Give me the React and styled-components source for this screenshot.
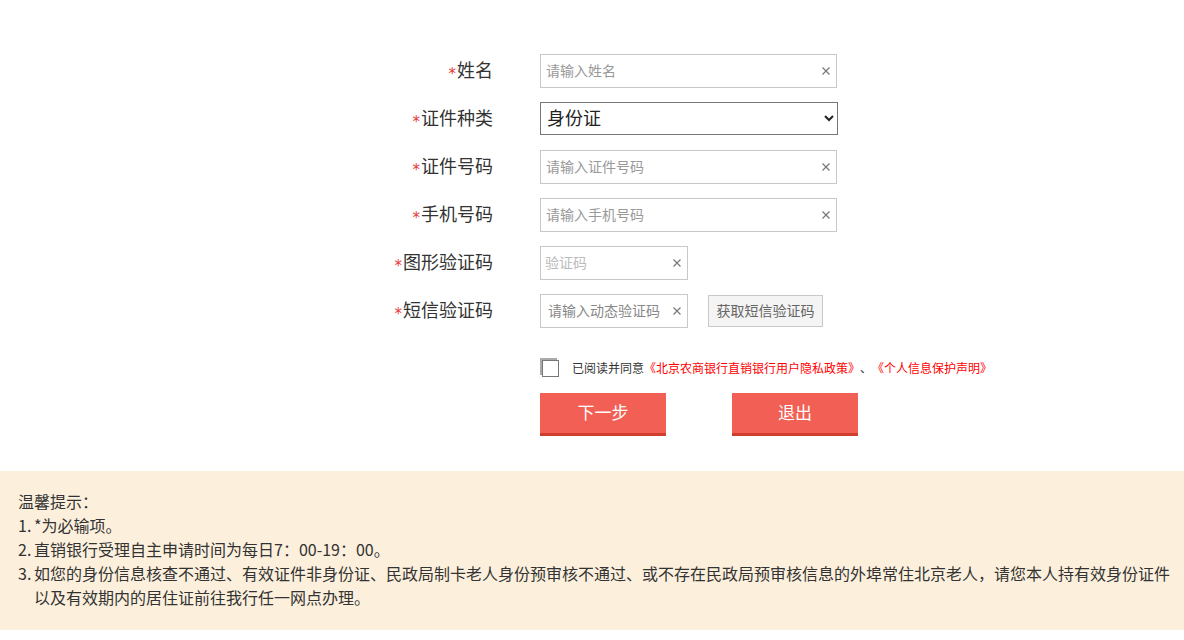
import React from 'react';
import styled, { createGlobalStyle } from 'styled-components';

const GlobalStyle = createGlobalStyle`
    html, body {
        margin: 0;
        padding: 0;
        background: #fff;
    }
    body {
        font-family: "Noto Sans CJK SC", "Noto Sans", sans-serif;
        color: #333;
    }
`;

const Page = styled.div`
    width: 1184px;
    height: 640px;
    overflow: hidden;
    background: #fff;
`;

const Form = styled.form`
    padding-top: 54px;
`;

const Row = styled.div`
    display: flex;
    align-items: center;
    height: 34px;
    margin-bottom: 14px;

    &:last-of-type {
        margin-bottom: 0;
    }
`;

const Label = styled.label`
    flex: 0 0 540px;
    box-sizing: border-box;
    padding: 0 47px 2px 0;
    text-align: right;
    font-size: 18px;
    line-height: 32px;
    color: #333;

    i {
        font-style: normal;
        font-family: "DejaVu Sans", sans-serif;
        color: #e4393c;
        font-size: 15px;
        margin-right: 1px;
        position: relative;
        top: 2px;
    }
`;

const Field = styled.div`
    position: relative;
    width: ${props => props.width}px;
    height: 34px;
`;

const Input = styled.input`
    width: 100%;
    height: 100%;
    box-sizing: border-box;
    border: 1px solid #c8c8c8;
    border-radius: 0;
    outline: none;
    padding: 0 26px 2px ${props => props.$pad || 5}px;
    font-family: "Noto Sans CJK SC", sans-serif;
    font-size: 14px;
    color: #333;

    &::placeholder {
        color: ${props => props.$ph || '#999'};
    }
`;

const Clear = styled.span`
    position: absolute;
    right: 7px;
    top: 50%;
    width: 8px;
    height: 8px;
    margin-top: -4px;
    display: flex;
`;

const Select = styled.select`
    align-self: flex-start;
    width: 298px;
    height: 33px;
    box-sizing: border-box;
    border: 1px solid #767676;
    border-radius: 0;
    background: #fff;
    padding: 0 2px 4px;
    font-family: "Noto Sans CJK SC", sans-serif;
    font-size: 18px;
    color: #222;
    outline: none;
`;

const SmsButton = styled.button`
    margin-left: 20px;
    width: 115px;
    height: 32px;
    box-sizing: border-box;
    border: 1px solid #c8c8c8;
    background: #f4f4f4;
    color: #666;
    font-family: "Noto Sans CJK SC", sans-serif;
    font-size: 14px;
    padding: 0 0 2px;
    cursor: pointer;
`;

const Agree = styled.div`
    display: flex;
    align-items: center;
    margin: 30px 0 0 542px;
    height: 18px;
    font-size: 12px;
    color: #333;

    a {
        color: #f00;
        text-decoration: none;
    }
`;

const Check = styled.span`
    width: 17px;
    height: 17px;
    box-sizing: border-box;
    border: 1px solid #777;
    box-shadow: -2px -2px 0 #aaa;
    background: #fff;
    margin: 2px 13px 0 0;
`;

const Buttons = styled.div`
    display: flex;
    gap: 66px;
    margin: 17px 0 0 540px;
`;

const RedButton = styled.button`
    width: 126px;
    height: 43px;
    box-sizing: border-box;
    border: 0;
    border-bottom: 3px solid #d23e2e;
    background: #f15f55;
    color: #fff;
    font-family: "Noto Sans CJK SC", sans-serif;
    font-size: 17px;
    padding: 0 0 4px;
    cursor: pointer;
`;

const Tips = styled.div`
    margin-top: 35px;
    background: #fcf0dd;
    padding: 18px 14px 21px 18px;
    font-size: 16px;
    line-height: 24px;
    color: #333;
`;

const Tip = styled.div`
    display: flex;

    b {
        flex: 0 0 16px;
        font-weight: normal;
    }
`;

const ClearIcon = () => (
    <Clear>
        <svg width="8" height="8" viewBox="0 0 8 8">
            <path d="M0.5 0.5L7.5 7.5M7.5 0.5L0.5 7.5" stroke="#777" strokeWidth="1.2" />
        </svg>
    </Clear>
);

const TextField = ({ width = 297, placeholder, pad, ph }) => (
    <Field width={width}>
        <Input placeholder={placeholder} $pad={pad} $ph={ph} />
        <ClearIcon />
    </Field>
);

export default function App() {
    return (
        <Page>
            <GlobalStyle />
            <Form onSubmit={e => e.preventDefault()}>
                <Row>
                    <Label><i>*</i>姓名</Label>
                    <TextField placeholder="请输入姓名" />
                </Row>
                <Row>
                    <Label><i>*</i>证件种类</Label>
                    <Select defaultValue="id">
                        <option value="id">身份证</option>
                    </Select>
                </Row>
                <Row>
                    <Label><i>*</i>证件号码</Label>
                    <TextField placeholder="请输入证件号码" />
                </Row>
                <Row>
                    <Label><i>*</i>手机号码</Label>
                    <TextField placeholder="请输入手机号码" />
                </Row>
                <Row>
                    <Label><i>*</i>图形验证码</Label>
                    <TextField width={148} placeholder="验证码" ph="#bbb" pad={4} />
                </Row>
                <Row>
                    <Label><i>*</i>短信验证码</Label>
                    <TextField width={148} placeholder="请输入动态验证码" ph="#888" pad={7} />
                    <SmsButton type="button">获取短信验证码</SmsButton>
                </Row>
            </Form>
            <Agree>
                <Check />
                已阅读并同意
                <a href="#">《北京农商银行直销银行用户隐私政策》</a>
                、
                <a href="#">《个人信息保护声明》</a>
            </Agree>
            <Buttons>
                <RedButton type="button">下一步</RedButton>
                <RedButton type="button">退出</RedButton>
            </Buttons>
            <Tips>
                <div>温馨提示：</div>
                <Tip><b>1.</b><span>*为必输项。</span></Tip>
                <Tip><b>2.</b><span>直销银行受理自主申请时间为每日7：00-19：00。</span></Tip>
                <Tip>
                    <b>3.</b>
                    <span>如您的身份信息核查不通过、有效证件非身份证、民政局制卡老人身份预审核不通过、或不存在民政局预审核信息的外埠常住北京老人，请您本人持有效身份证件以及有效期内的居住证前往我行任一网点办理。</span>
                </Tip>
            </Tips>
        </Page>
    );
}
